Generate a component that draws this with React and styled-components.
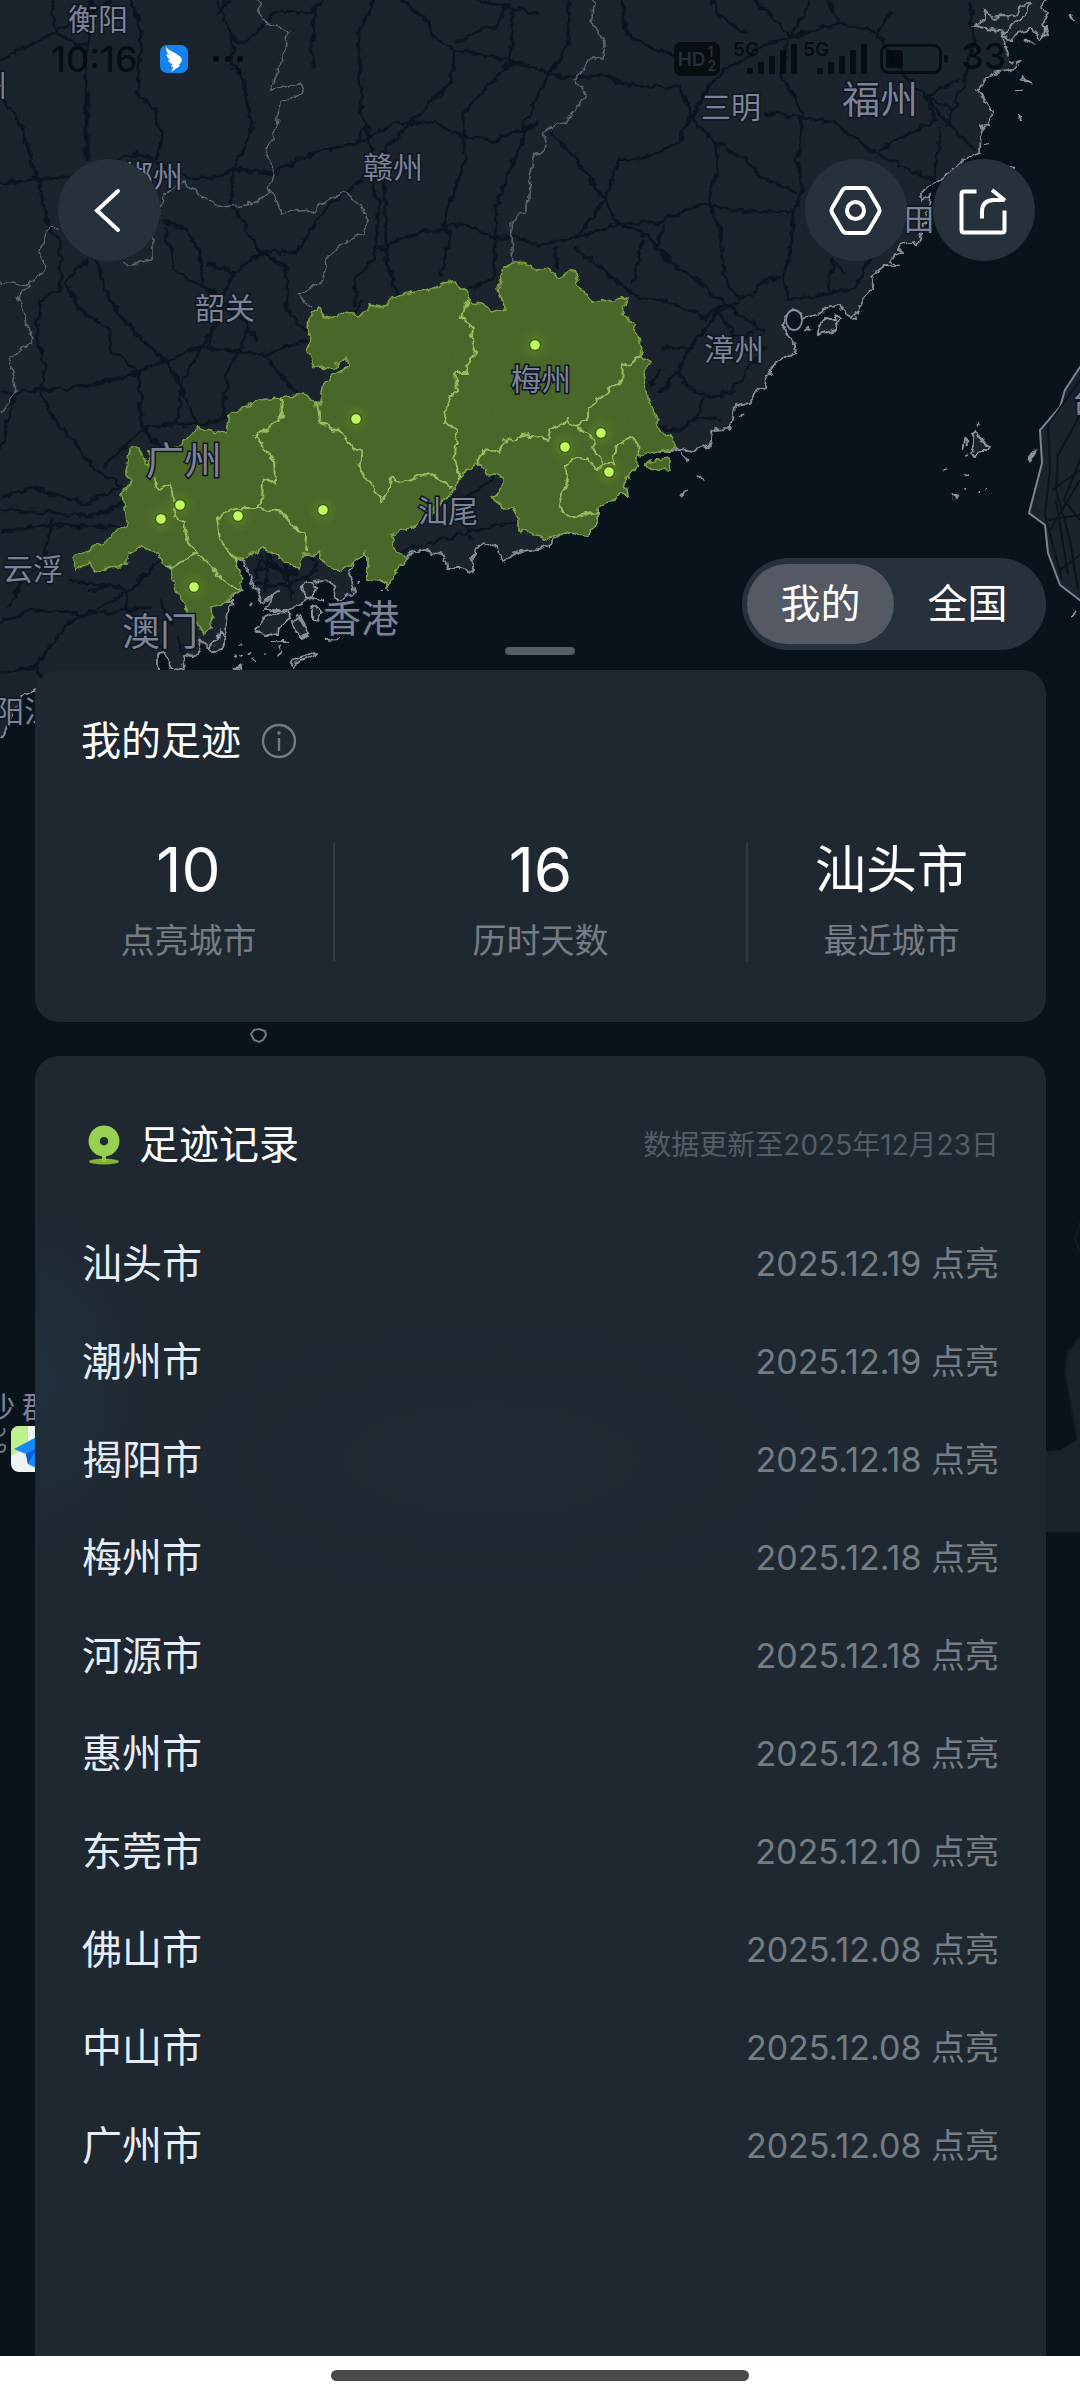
import { useState } from "react";
import styled, { createGlobalStyle } from "styled-components";

const RECORDS = [
  { city: "汕头市", date: "2025.12.19" },
  { city: "潮州市", date: "2025.12.19" },
  { city: "揭阳市", date: "2025.12.18" },
  { city: "梅州市", date: "2025.12.18" },
  { city: "河源市", date: "2025.12.18" },
  { city: "惠州市", date: "2025.12.18" },
  { city: "东莞市", date: "2025.12.10" },
  { city: "佛山市", date: "2025.12.08" },
  { city: "中山市", date: "2025.12.08" },
  { city: "广州市", date: "2025.12.08" },
];

const STATS = [
  { value: "10", label: "点亮城市" },
  { value: "16", label: "历时天数" },
  { value: "汕头市", label: "最近城市", isText: true },
];

const TABS = ["我的", "全国"];

/* ---------- map data ---------- */

const COAST =
  "M1046 0L1040 8 1048 14 1043 24 1048 34 1040 38 1030 28 1018 32 1012 40 1004 36 1001 30 985 28 974 26 984 18 985 10 993 18 1003 16 1015 17 1020 6 1031 3 1024 16 1015 24 1004 33 1005 47 1012 63 1020 60 1012 70 998 72 986 78 977 90 984 100 991 110 989 125 981 127 980 153 970 157 962 162 950 172 936 183 922 190 922 200 930 196 929 206 926 220 920 233 916 246 911 240 905 243 898 246 903 254 895 252 890 262 900 267 884 267 871 277 874 287 862 300 853 318 846 313 840 305 826 308 822 313 802 317 800 312 793 309 786 315 783 327 788 337 795 343 796 353 778 362 767 377 766 386 755 392 748 403 735 405 734 415 728 428 714 429 710 445 695 450 680 448 670 450 657 452 638 455 637 467 625 480 628 495 620 495 610 503 597 507 597 523 587 535 563 532 547 545 538 548 523 550 503 562 497 547 483 543 475 550 473 560 473 572 460 567 447 567 443 555 423 550 407 555 403 563 392 575 389 587 385 581 368 580 368 557 365 554 353 562 350 573 355 593 337 600 330 580 313 582 302 588 310 598 300 604 289 610 265 610 270 600 280 592 262 602 255 588 248 573 243 560 236 560 243 590 224 602 234 602 227 613 224 637 217 648 207 647 200 640 198 653 183 657 184 672 172 667 164 652 157 653 157 680 35 690 21 697 7 723 0 737";

const LIT =
  "M312 313L319 308 325 318 344 313 362 315 370 305 384 308 391 297 408 292 427 290 451 280 465 290 470 302 482 303 492 313 506 310 498 290 503 268 517 262 530 265 537 271 550 269 558 278 573 270 578 280 578 288 588 293 591 304 628 297 622 312 632 323 640 340 643 357 650 364 643 373 648 403 654 412 658 430 675 438 675 447 657 452 638 455 637 467 625 480 628 495 620 495 610 503 597 507 597 523 587 535 563 532 547 539 530 533 518 530 518 517 513 508 507 509 493 498 502 488 502 477 490 475 478 462 463 473 460 483 447 497 417 525 392 535 395 548 405 558 403 563 392 575 389 587 385 581 368 580 368 557 365 554 353 562 340 570 328 568 319 553 303 555 298 570 289 563 275 555 262 547 248 557 236 560 243 588 226 602 212 607 213 627 205 633 189 613 176 590 170 568 162 563 158 552 138 547 129 552 126 565 110 567 95 572 90 562 77 570 74 557 95 546 110 540 114 533 127 527 122 495 133 480 126 472 130 448 139 448 141 460 148 465 150 452 179 447 198 427 210 431 226 432 229 415 258 400 281 398 303 395 319 403 325 383 337 373 349 367 346 357 336 363 334 369 315 368 308 350 310 337 307 328Z M645 464L668 459 671 470 647 468Z";

const CITY_BORDERS = [
  "M467 300L462 317 473 327 472 337 475 353 465 367 467 373 455 373 457 390 448 400 445 422 457 430 455 457 460 480",
  "M317 402L320 422 342 432 352 448 362 453 357 468 367 477 382 502 392 478 400 483 430 473 453 487",
  "M281 398L282 417 255 437 274 460 275 483 263 478 262 503 257 508 238 508 217 518 220 540 238 563",
  "M257 508L282 513 294 527 306 537 305 553",
  "M154 475L158 490 169 483 174 498 174 517 184 523 188 543 196 553 179 563 170 568M196 555L213 567 224 583 241 589",
  "M477 462L485 450 500 453 505 437 513 440 527 435 548 440 550 430 567 420 575 425 588 420 588 407 603 395 622 380 623 367 642 357",
  "M575 425L593 438 595 453 605 463 613 463 617 445 630 438 638 443 639 455",
  "M605 463L598 470 587 458 578 457 567 465 568 477 563 490 558 507 575 518 597 512",
];

const PROVINCE_BORDERS = [
  "M257 0L262 20 288 32 286 50 270 90 300 83 305 92 279 103 277 130 265 150 274 173 270 190 255 203 224 207 207 200 193 190 183 182 165 193 152 233 152 260 124 265",
  "M270 190L282 213 312 210 344 193 368 213 365 233 348 240 327 257 320 283 298 295 313 307",
  "M593 0L592 20 604 43 602 60 592 57 576 80 586 93 571 117 543 132 547 145 534 155 530 177 527 207 510 223 513 263",
  "M0 282L29 285 45 270 41 250 48 227 60 228M29 285L17 297 26 323 33 340 10 360 17 390 0 413",
];

const ROADS = [
  "M0 61L55 32 90 13 112 0M52 0L55 33 86 47 94 20 90 0M86 47L86 160",
  "M131 0L141 30 138 93 155 110 162 140 158 160M88 90L88 160",
  "M217 0L234 40 231 63 244 80 248 113 253 127 244 150 232 173 231 203 248 230 260 252 286 267 286 307 306 333",
  "M234 40L244 43 262 27 275 12 310 13 324 0M313 13L312 50 316 68M217 14L228 0",
  "M374 0L358 33 362 117 370 140 372 187 379 200 375 253 368 267 355 277 355 307M358 143L360 130 370 128",
  "M401 0L427 20 432 35 455 50 451 83 413 120 384 150 386 260 396 290 395 323 377 357 375 410",
  "M455 43L478 30 496 27 506 7 475 0M506 7L540 15M455 50L510 60 540 70 561 78 602 75 630 85 678 87 692 113 678 143 647 157 619 160 605 200 578 237 540 245 517 237 492 237 461 223 406 237 375 250",
  "M513 10L510 63 463 113 465 160 444 223 449 237 441 277",
  "M0 183L69 177 138 153 186 177 213 178 234 170 275 173 313 152 358 143 393 123 434 123 463 137 492 140 540 123",
  "M0 93L21 127 38 180 48 227 60 240 60 290 41 300 36 333 45 367 40 393 57 423 96 470 124 487",
  "M86 260L65 283 83 313 107 327 112 350 138 373 143 427 160 450",
  "M96 260L110 300 134 333 165 360 183 390 196 423 200 450",
  "M162 220L186 230 200 253 203 283 220 297M165 227L176 273 207 290 234 312 250 327 257 340",
  "M207 263L234 273 262 252 296 253 324 210 362 180M234 273L224 293",
  "M540 90L568 43 569 0M540 90L522 130 524 140 510 167 496 207 494 277 468 290",
  "M0 393L17 392 83 387 131 375 200 347 265 355 306 340M250 327L227 373 224 417M213 327L183 380 176 423M265 355L286 383 303 400",
  "M17 392L0 450M103 467L145 427 213 422 229 415M207 347L224 306",
  "M0 497L31 488 86 503 121 487M0 510L52 512 90 517 127 503M0 532L48 525 127 527M52 517L45 557 20 585 7 607",
  "M0 623L34 610 83 615 152 607M0 673L34 667 69 623 127 593 160 560M34 667L50 690M70 580L127 590 M127 590L127 612M90 590L120 586",
  "M623 0L626 33 654 50 705 63M712 0L719 17 747 33M754 0L788 33 781 73 803 117 798 160 802 190 793 213 791 247 784 283 786 300",
  "M810 0L791 37 765 45 712 80 692 120 716 143 717 173 709 203 719 227 723 273 736 297 753 297 760 283 781 277",
  "M826 0L840 23 877 33 891 10M791 37L840 23M877 33L900 70 926 97 936 120 877 150M960 78L926 97 945 120 975 150M926 97L955 110",
  "M764 113L805 118 836 123 874 153 933 180M941 127L933 183M970 0L974 40 964 83 946 127M716 143L747 160 760 177 798 193",
  "M550 133L574 157 605 200 616 223 643 233 678 267 726 303 765 333M578 237L623 223 657 223 705 203 733 210 793 213",
  "M554 247L557 267M574 247L619 283 636 297 664 300 705 318 726 303M643 240L633 283M665 225L655 245 670 265",
  "M660 348L690 348 717 313 740 300 M660 393L677 370 687 387 710 398 733 390 750 367 765 345M690 348L678 370",
  "M660 427L680 430 697 417 705 398M697 417L720 420M650 385L660 370M786 300L829 293 850 290 862 277 870 255 M833 260L829 293M833 260L845 275M717 313L740 340 755 330M786 250L791 247",
  "M363 300L340 343 316 363M307 335L330 335 343 347 380 360 417 368 433 377 407 400 377 412M433 377L447 373M463 300L447 373 430 407 418 427 418 450",
  "M229 440L300 447 360 452 403 457 453 445 500 443M510 317L487 340 483 380 490 400 490 453M550 270L550 333 567 343 593 343 623 320",
  "M510 317L533 340 500 407 540 413 553 430M447 373L483 385 513 373M313 407L313 473 305 500 313 560M500 460L540 473 580 487 615 487M547 466L527 513",
  "M357 427L340 473 327 497M220 530L300 530 380 523 415 526M520 530L593 522M145 500L180 497 230 505 310 500M180 460L190 500 200 545 215 560M160 520L215 530 225 480 205 465M225 480L260 470M140 540L170 535 210 545M232 540L260 555M245 512L250 552M330 500L340 530 345 560M300 460L270 440 240 438M260 555L255 580M270 555L285 580 300 560M262 560L290 575M340 550L375 548 385 560M625 365L632 400 625 430 660 430M570 487L568 510M597 485L597 505M400 552L440 540 500 525 518 522M470 540L462 500 495 478",
  "M252 570L275 568 300 575M256 585L290 584 318 570M268 555L266 592M285 560L292 600M318 560L308 580M176 635L184 655M160 600L172 625",
];

// harbour and outlying islands
const ISLETS = [
  "M256 630L263 618 273 613 288 612 290 618 282 624 278 632 268 636 262 633ZM291 622L299 617 304 626 309 634 301 638 295 630ZM302 588L309 583 316 588 314 596 306 599ZM311 610L317 606 322 612 318 620 311 621ZM303 600L311 596 323 602",
  "M291 663L297 658 306 656 314 651 317 654 308 659 300 661 294 666ZM236 667L242 665 240 671ZM239 656L243 657M232 656L236 655M248 654L252 650M253 659L256 661M219 630L224 636 222 648 214 652 210 645 217 641ZM279 649L281 645M276 656L281 652M265 655L267 654M240 647L243 644M252 606L254 603M381 590L384 591M356 580L358 583M270 641L288 641M325 641L340 640",
  "M820 326L826 318 836 322 834 314 842 320 834 330 824 333 818 335ZM804 330L808 326 810 331ZM645 464L650 462",
  "M972 438L976 430 982 441 989 446 988 450 978 450 976 456 970 454 974 446ZM962 449L965 438 967 447M977 424L979 422M966 458L968 456M963 474L969 475M943 470L944 471M954 496L958 498 956 500ZM978 491L980 491M986 490L988 490M965 489L967 489",
  "M1028 461L1032 453 1036 451 1032 457ZM1070 617L1075 612M1024 76L1029 82 1022 80ZM1016 90L1022 91M1018 116L1024 119M1070 14L1073 22M1045 26L1044 36M1026 40L1034 44M985 145L989 144M1005 165L1015 168M680 451L687 461M699 475L704 482M682 496L688 490M740 418L746 414",
];

const TAIWAN = "M1090 352L1080 367 1065 390 1060 407 1040 430 1042 463 1029 513 1045 525 1048 553 1060 585 1090 608";

const TAIWAN_ROADS =
  "M1080 380L1048 425 1050 470 1045 515 1062 580M1080 415L1058 455 1056 490 1070 540 1078 590M1080 480L1050 530M1080 460L1064 500 1080 520M1052 490L1080 470M1048 520L1080 515M1060 570L1080 555M1056 500L1068 575";

const LABELS = [
  { text: "衡阳", x: 98, y: 19 },
  { text: "郴州", x: 153, y: 176 },
  { text: "赣州", x: 393, y: 167 },
  { text: "韶关", x: 225, y: 308 },
  { text: "三明", x: 731, y: 107 },
  { text: "福州", x: 880, y: 99, big: true },
  { text: "莆田", x: 904, y: 219 },
  { text: "漳州", x: 734, y: 349 },
  { text: "梅州", x: 541, y: 379 },
  { text: "广州", x: 184, y: 460, big: true },
  { text: "汕尾", x: 448, y: 511 },
  { text: "云浮", x: 33, y: 569 },
  { text: "澳门", x: 160, y: 631, big: true },
  { text: "香港", x: 361, y: 618, big: true },
  { text: "阳江", x: 24, y: 711 },
  { text: "永州", x: -23, y: 85 },
  { text: "台中", x: 1102, y: 401 },
  { text: "沙", x: 0, y: 1407 },
  { text: "群", x: 37, y: 1407 },
];

const PINS = [
  [535, 345], [356, 419], [565, 447], [601, 433], [609, 472],
  [323, 510], [238, 516], [180, 505], [161, 519], [194, 587],
];

const FootprintMap = () => (
  <MapSvg viewBox="0 0 1080 2400" preserveAspectRatio="xMidYMin slice" aria-hidden="true">
    <defs>
      <filter id="rough" filterUnits="userSpaceOnUse" x="-20" y="-20" width="1120" height="800" colorInterpolationFilters="sRGB">
        <feTurbulence type="fractalNoise" baseFrequency="0.11" numOctaves="2" seed="4" />
        <feDisplacementMap in="SourceGraphic" scale="9" xChannelSelector="R" yChannelSelector="G" />
      </filter>
      <radialGradient id="glow">
        <stop offset="0" stopColor="#6f9c2a" stopOpacity="0.4" />
        <stop offset="1" stopColor="#6f9c2a" stopOpacity="0" />
      </radialGradient>
      <clipPath id="badge">
        <rect x="11" y="1426" width="46" height="46" rx="8" />
      </clipPath>
    </defs>

    <path d={`${COAST}L-40 760L-40 -40L1046 -40Z`} fill="#1b242d" filter="url(#rough)" />
    <path d={TAIWAN} fill="#1b242d" stroke="#7d8590" strokeWidth="2" />
    <path d={TAIWAN_ROADS} fill="none" stroke="#0b151e" strokeWidth="2" />

    <g fill="none" stroke="#0b151f" strokeWidth="3" strokeLinejoin="round" filter="url(#rough)">
      {ROADS.map((d) => (
        <path key={d} d={d} />
      ))}
    </g>
    <g fill="none" stroke="#5d646f" strokeWidth="1.6" filter="url(#rough)">
      {PROVINCE_BORDERS.map((d) => (
        <path key={d} d={d} />
      ))}
    </g>
    <path d={COAST} fill="none" stroke="#858d97" strokeWidth="1.8" filter="url(#rough)" />
    <g fill="#1b242d" stroke="#8b939c" strokeWidth="2" filter="url(#rough)">
      {ISLETS.map((d) => (
        <path key={d} d={d} />
      ))}
    </g>
    <ellipse cx="794" cy="320" rx="8" ry="10" fill="#0b151f" stroke="#858d97" strokeWidth="1.8" />

    <g filter="url(#rough)">
      <path d={LIT} fill="#4f6f28" fillOpacity="0.9" stroke="#7da046" strokeWidth="1.6" />
      <g fill="none" stroke="#9bbd62" strokeWidth="2">
        {CITY_BORDERS.map((d) => (
          <path key={d} d={d} />
        ))}
      </g>
    </g>

    {/* small shoal and the shore further south */}
    <path d="M251 1034L254 1030 259 1029 265 1031 266 1035 263 1040 259 1042 254 1040Z" fill="none" stroke="#6f7780" strokeWidth="2" />
    <path d="M1080 1337L1067 1353 1065 1373 1077 1440 1060 1450 1040 1452 1040 1532 1080 1532Z" fill="#19232b" />
    <path d="M1080 1337L1067 1353 1065 1373 1077 1440M1080 1222L1075 1240 1080 1252" fill="none" stroke="#111b23" strokeWidth="2" />
    <path d="M0 1436Q6 1434 4 1428M0 1452Q6 1452 5 1446 2 1443 0 1446" fill="none" stroke="#6a727b" strokeWidth="2" />
    <g clipPath="url(#badge)">
      <rect x="11" y="1426" width="46" height="46" fill="#eef3f4" />
      <path d="M11 1426H28V1446L11 1456Z" fill="#c0f08c" />
      <path d="M14 1449L57 1426 40 1470 28 1464 26 1454Z" fill="#1788ff" />
      <path d="M28 1464L26 1454 42 1445 32 1456Z" fill="#0a5ad0" />
    </g>

    {LABELS.map(({ text, x, y, big }) => (
      <MapLabel key={text} x={x} y={y} $big={big} dy="0.37em">
        {text}
      </MapLabel>
    ))}

    {PINS.map(([x, y]) => (
      <g key={`${x}-${y}`}>
        <circle cx={x} cy={y} r="16" fill="url(#glow)" />
        <circle cx={x} cy={y} r="5.5" fill="#c2fb5e" stroke="#3c5c1c" strokeWidth="1.4" />
      </g>
    ))}
  </MapSvg>
);

const Bars = () => (
  <svg width="50" height="30" viewBox="0 0 50 30" fill="currentColor">
    <rect x="0" y="24" width="6" height="6" rx="1" />
    <rect x="11" y="18" width="6" height="12" rx="1" />
    <rect x="22" y="12" width="6" height="18" rx="1" />
    <rect x="33" y="6" width="6" height="24" rx="1" />
    <rect x="44" y="0" width="6" height="30" rx="1" />
  </svg>
);

const StatusBar = () => (
  <StatusRow>
    <StatusGroup>
      <Clock>10:16</Clock>
      <svg width="28" height="28" viewBox="0 0 28 28">
        <rect width="28" height="28" rx="7" fill="#1583ee" />
        <path
          d="M6 1.5C7 5 15 7 20 11.5C22.5 13.8 22 16 20.5 18L18.5 20.5H20.5L11 27L13.5 21.8H11L12.5 19C9.5 18 8.5 16.5 8 14.5L11 15C8 13.5 6.8 11.5 6.3 9L9.5 10C6.8 8 5.6 5 6 1.5Z"
          fill="#fff"
        />
      </svg>
      <svg width="34" height="8" viewBox="0 0 34 8" fill="#060b10">
        <circle cx="6" cy="4" r="3" />
        <circle cx="18" cy="4" r="3" />
        <circle cx="30" cy="4" r="3" />
      </svg>
    </StatusGroup>
    <SignalGroup>
      <HdBadge>
        HD
        <HdLines>
          <span>1</span>
          <span>2</span>
        </HdLines>
      </HdBadge>
      <Signals>
        <Signal>
          <Network>5G</Network>
          <Bars />
        </Signal>
        <Signal>
          <Network>5G</Network>
          <Bars />
        </Signal>
      </Signals>
      <svg width="68" height="30" viewBox="0 0 68 30">
        <rect x="1.5" y="1.5" width="59" height="27" rx="7" fill="none" stroke="currentColor" strokeWidth="3" />
        <rect x="6" y="6" width="17" height="18" rx="3" fill="currentColor" />
        <rect x="64" y="11" width="4" height="8" rx="2" fill="currentColor" />
      </svg>
      <Percent>
        33<small>%</small>
      </Percent>
    </SignalGroup>
  </StatusRow>
);

const BackIcon = () => (
  <svg width="102" height="102" viewBox="0 0 102 102" fill="none" stroke="#fff" strokeWidth="4">
    <path d="M60 32L39 51.5L60 71" strokeLinecap="round" />
  </svg>
);

const SettingsIcon = () => (
  <svg width="102" height="102" viewBox="0 0 102 102" fill="none" stroke="#fff" strokeWidth="4">
    <path
      d="M41.5 29H59.5Q62 29 63.5 31.3L74 49.2Q75 51.5 74 53.8L63.5 71.7Q62 74 59.5 74H41.5Q39 74 37.5 71.7L27 53.8Q26 51.5 27 49.2L37.5 31.3Q39 29 41.5 29Z"
      strokeLinejoin="round"
    />
    <circle cx="50.5" cy="51.5" r="8.5" />
  </svg>
);

const ShareIcon = () => (
  <svg width="102" height="102" viewBox="0 0 102 102" fill="none" stroke="#fff" strokeWidth="4">
    <path d="M43.5 32.5H31Q28.5 32.5 28.5 35V71Q28.5 73.5 31 73.5H69Q71.5 73.5 71.5 71V51.5" />
    <path d="M49 59.5V53Q49 41 61 41H71.5" />
    <path d="M59 31L72 41.5" />
  </svg>
);

const InfoIcon = () => (
  <svg width="36" height="36" viewBox="0 0 36 36" fill="none" stroke="#747b83" strokeWidth="2.4">
    <circle cx="18" cy="18" r="16" />
    <path d="M18 15V28" />
    <circle cx="18" cy="10" r="1.8" fill="#747b83" stroke="none" />
  </svg>
);

const PinIcon = () => (
  <svg width="44" height="44" viewBox="0 0 44 44">
    <ellipse cx="22" cy="38.5" rx="15" ry="3" fill="#7fb530" />
    <rect x="20" y="28" width="4" height="11" fill="#8cc63e" />
    <path d="M22 2.5a15.5 15.5 0 1 0 .01 0ZM22 14a4.2 4.2 0 1 1-.01 0Z" fill="#98d151" fillRule="evenodd" />
  </svg>
);

export default function App() {
  const [tab, setTab] = useState(TABS[0]);

  return (
    <Page>
      <GlobalStyle />
      <FootprintMap />
      <Content>
        <StatusBar />
        <Toolbar>
          <RoundButton aria-label="返回">
            <BackIcon />
          </RoundButton>
          <ToolbarActions>
            <RoundButton aria-label="设置">
              <SettingsIcon />
            </RoundButton>
            <RoundButton aria-label="分享">
              <ShareIcon />
            </RoundButton>
          </ToolbarActions>
        </Toolbar>

        <SheetTop>
          <Handle />
          <Toggle>
            {TABS.map((name) => (
              <ToggleButton
                key={name}
                $active={name === tab}
                aria-pressed={name === tab}
                onClick={() => setTab(name)}
              >
                {name}
              </ToggleButton>
            ))}
          </Toggle>
        </SheetTop>

        <Sheet>
          <SummaryCard>
            <SummaryHeader>
              <Title>我的足迹</Title>
              <InfoButton aria-label="说明">
                <InfoIcon />
              </InfoButton>
            </SummaryHeader>
            <Stats>
              {STATS.map(({ value, label, isText }) => (
                <Stat key={label}>
                  <StatValue $isText={isText}>{value}</StatValue>
                  <StatLabel>{label}</StatLabel>
                </Stat>
              ))}
            </Stats>
          </SummaryCard>

          <RecordsCard>
            <RecordsHeader>
              <PinIcon />
              <Title>足迹记录</Title>
              <Updated>数据更新至2025年12月23日</Updated>
            </RecordsHeader>
            <RecordList>
              {RECORDS.map(({ city, date }) => (
                <Record key={city}>
                  <City>{city}</City>
                  <LitDate>{date} 点亮</LitDate>
                </Record>
              ))}
            </RecordList>
          </RecordsCard>
        </Sheet>
      </Content>
      <NavBar>
        <NavPill />
      </NavBar>
    </Page>
  );
}

const GlobalStyle = createGlobalStyle`
  * {
    box-sizing: border-box;
  }
  body {
    margin: 0;
    background: #08131b;
    font-family: Inter, "Noto Sans CJK SC", sans-serif;
    color: #fff;
  }
  button {
    font: inherit;
    color: inherit;
    border: none;
    padding: 0;
    background: none;
    cursor: pointer;
  }
  svg {
    display: block;
    flex-shrink: 0;
  }
`;

const Page = styled.div`
  position: relative;
  min-height: 100vh;
  display: flex;
  flex-direction: column;
  overflow: hidden;
  background: #08131b;
`;

const MapSvg = styled.svg`
  position: absolute;
  inset: 0;
  width: 100%;
  height: 100%;
`;

const MapLabel = styled.text`
  font-family: "Noto Sans CJK SC", sans-serif;
  font-size: ${({ $big }) => ($big ? "38px" : "30px")};
  text-anchor: middle;
  fill: #7d8297;
  stroke: #0d1622;
  stroke-width: 3px;
  paint-order: stroke;
`;

const Content = styled.div`
  position: relative;
  flex: 1;
  display: flex;
  flex-direction: column;
`;

const StatusRow = styled.div`
  height: 118px;
  padding: 0 56px 0 51px;
  display: flex;
  align-items: center;
  justify-content: space-between;
  color: rgba(3, 7, 10, 0.8);
`;

const StatusGroup = styled.div`
  display: flex;
  align-items: center;
  gap: 22px;
`;

const SignalGroup = styled(StatusGroup)`
  gap: 13px;
`;

const Clock = styled.span`
  font-size: 36px;
  font-weight: 500;
  line-height: 40px;
`;

const HdBadge = styled.span`
  width: 46px;
  height: 34px;
  border-radius: 7px;
  background: #080d12;
  color: #252f38;
  font-size: 19px;
  font-weight: 600;
  display: flex;
  align-items: center;
  justify-content: center;
  gap: 2px;
`;

const HdLines = styled.span`
  display: flex;
  flex-direction: column;
  font-size: 14px;
  line-height: 14px;
`;

const Signals = styled.span`
  display: flex;
  gap: 6px;
`;

const Signal = styled.span`
  position: relative;
  padding-left: 14px;
`;

const Network = styled.span`
  position: absolute;
  left: 0;
  top: -4px;
  font-size: 19px;
  font-weight: 600;
  line-height: 19px;
`;

const Percent = styled.span`
  font-size: 36px;
  font-weight: 500;
  line-height: 40px;

  small {
    font-size: 18px;
  }
`;

const Toolbar = styled.header`
  padding: 41px 45px 0 58px;
  display: flex;
  justify-content: space-between;
`;

const ToolbarActions = styled.div`
  display: flex;
  gap: 26px;
`;

const RoundButton = styled.button`
  width: 102px;
  height: 102px;
  border-radius: 50%;
  background: #27313b;
`;

const SheetTop = styled.div`
  margin-top: 297px;
  padding: 0 34px;
  display: grid;
  grid-template-columns: 1fr auto 1fr;
`;

const Handle = styled.div`
  grid-column: 2;
  align-self: end;
  width: 70px;
  height: 8px;
  border-radius: 4px;
  background: #555d64;
`;

const Toggle = styled.div`
  grid-column: 3;
  justify-self: end;
  margin-bottom: 5px;
  padding: 6px 5px;
  display: flex;
  border-radius: 46px;
  background: #27313b;
`;

const ToggleButton = styled.button`
  width: 147px;
  height: 80px;
  border-radius: 40px;
  font-size: 40px;
  line-height: 78px;
  background: ${({ $active }) => ($active ? "#545963" : "transparent")};
`;

const Sheet = styled.main`
  flex: 1;
  margin-top: 15px;
  padding: 0 34px 0 35px;
  display: flex;
  flex-direction: column;
  gap: 34px;
`;

const SummaryCard = styled.section`
  padding: 47px 11px 61px 9px;
  border-radius: 24px;
  background: radial-gradient(ellipse 130px 110px at 49% 32%, #222832, rgba(34, 40, 50, 0)),
    #1f2831;
`;

const SummaryHeader = styled.div`
  padding: 0 37px;
  display: flex;
  align-items: center;
  gap: 20px;
`;

const Title = styled.h2`
  margin: 0;
  font-size: 40px;
  font-weight: 400;
  line-height: 48px;
`;

const InfoButton = styled.button`
  width: 36px;
  height: 36px;
`;

const Stats = styled.div`
  margin-top: 78px;
  display: grid;
  grid-template-columns: 7fr 10fr 7fr;
`;

const Stat = styled.div`
  display: flex;
  flex-direction: column;
  align-items: center;
  gap: 24px;

  & + & {
    border-left: 2px solid #323b44;
  }
`;

const StatValue = styled.div`
  font-size: ${({ $isText }) => ($isText ? "51px" : "62px")};
  line-height: 54px;
`;

const StatLabel = styled.div`
  font-size: 34px;
  line-height: 40px;
  color: #757c84;
`;

const RecordsCard = styled.section`
  flex: 1;
  padding: 65px 47px 48px;
  border-radius: 24px 24px 0 0;
  background: radial-gradient(ellipse 120px 180px at 0 25%, #20303d, rgba(32, 48, 61, 0)),
    radial-gradient(ellipse 420px 160px at 45% 31%, #222a35, rgba(34, 42, 53, 0)), #1f2831;
`;

const RecordsHeader = styled.div`
  display: flex;
  align-items: center;
  gap: 13px;
`;

const Updated = styled.span`
  margin-left: auto;
  font-size: 28px;
  line-height: 48px;
  color: #545d66;
`;

const RecordList = styled.ul`
  margin: 46px 0 0;
  padding: 0;
  list-style: none;
`;

const Record = styled.li`
  height: 98px;
  display: flex;
  align-items: center;
  justify-content: space-between;
  line-height: 48px;
`;

const City = styled.span`
  font-size: 40px;
  color: #e6edf6;
`;

const LitDate = styled.span`
  font-size: 34px;
  color: #757c84;
`;

const NavBar = styled.footer`
  position: relative;
  height: 44px;
  padding-top: 14px;
  background: #fff;
`;

const NavPill = styled.div`
  width: 418px;
  max-width: 60%;
  height: 11px;
  margin: 0 auto;
  border-radius: 6px;
  background: #494949;
`;
